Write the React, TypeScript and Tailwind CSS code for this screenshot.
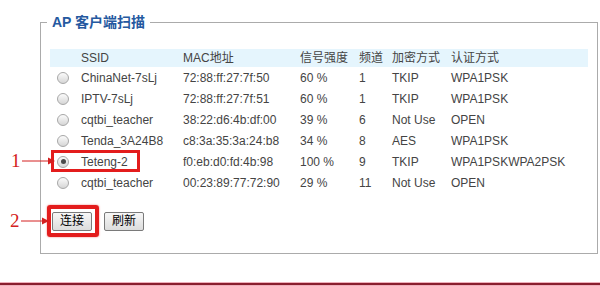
import React from 'react';

const rows = [
  { ssid: 'ChinaNet-7sLj', mac: '72:88:ff:27:7f:50', signal: '60 %', ch: '1', enc: 'TKIP', auth: 'WPA1PSK' },
  { ssid: 'IPTV-7sLj', mac: '72:88:ff:27:7f:51', signal: '60 %', ch: '1', enc: 'TKIP', auth: 'WPA1PSK' },
  { ssid: 'cqtbi_teacher', mac: '38:22:d6:4b:df:00', signal: '39 %', ch: '6', enc: 'Not Use', auth: 'OPEN' },
  { ssid: 'Tenda_3A24B8', mac: 'c8:3a:35:3a:24:b8', signal: '34 %', ch: '8', enc: 'AES', auth: 'WPA1PSK' },
  { ssid: 'Teteng-2', mac: 'f0:eb:d0:fd:4b:98', signal: '100 %', ch: '9', enc: 'TKIP', auth: 'WPA1PSKWPA2PSK', checked: true },
  { ssid: 'cqtbi_teacher', mac: '00:23:89:77:72:90', signal: '29 %', ch: '11', enc: 'Not Use', auth: 'OPEN' },
];

function Radio({ checked }: { checked?: boolean }) {
  return (
    <span className="ml-[7px] flex h-[12px] w-[12px] items-center justify-center rounded-full border border-[#a8a8a8] bg-gradient-to-b from-[#fbfbfb] to-[#d6d6d6]">
      {checked && <span className="h-[5px] w-[5px] rounded-full bg-[#4a4a4a]" />}
    </span>
  );
}

function Arrow({ x2 }: { x2: number }) {
  return (
    <svg width="60" height="12" viewBox="0 0 60 12" className="block">
      <line x1="0" y1="6" x2={x2 - 5} y2="6" stroke="#d42020" strokeWidth="1" />
      <polygon points={`${x2 - 7},2.5 ${x2},6 ${x2 - 7},9.5`} fill="#d42020" />
    </svg>
  );
}

export default function App() {
  return (
    <div
      className="relative flex h-[286px] w-[600px] flex-col bg-white text-[12px] text-[#444]"
      style={{ fontFamily: '"Liberation Sans", Arial, "Noto Sans CJK SC", sans-serif' }}
    >
      <div className="pl-[40px] pt-[14px]">
        <fieldset className="w-[558px] border border-[#ababab] px-[9px] pt-[19px] pb-[22px]">
          <legend className="ml-[-3px] px-[5px] text-[14px] font-bold leading-[16px] text-[#2559a0]">
            AP 客户端扫描
          </legend>
          <table className="w-[538px] table-fixed border-collapse">
            <colgroup>
              <col className="w-[28px]" />
              <col className="w-[102px]" />
              <col className="w-[117px]" />
              <col className="w-[59px]" />
              <col className="w-[33px]" />
              <col className="w-[59px]" />
              <col className="w-[140px]" />
            </colgroup>
            <thead>
              <tr className="h-[18px] bg-[#e5f5fd] text-left">
                <th className="font-normal"></th>
                <th className="pl-[3px] font-normal">SSID</th>
                <th className="pl-[3px] font-normal">MAC地址</th>
                <th className="pl-[3px] font-normal">信号强度</th>
                <th className="pl-[3px] font-normal">频道</th>
                <th className="pl-[3px] font-normal">加密方式</th>
                <th className="pl-[3px] font-normal">认证方式</th>
              </tr>
            </thead>
            <tbody>
              {rows.map((r, i) => (
                <tr key={i} className="h-[21px]">
                  <td>
                    <Radio checked={r.checked} />
                  </td>
                  <td className="pl-[3px]">{r.ssid}</td>
                  <td className="pl-[3px]">{r.mac}</td>
                  <td className="pl-[3px]">{r.signal}</td>
                  <td className="pl-[3px]">{r.ch}</td>
                  <td className="pl-[3px]">{r.enc}</td>
                  <td className="pl-[3px]">{r.auth}</td>
                </tr>
              ))}
            </tbody>
          </table>
          <div className="mt-[19px] ml-[2px] flex gap-[12px]">
            <button className="h-[19px] w-[40px] rounded-[2px] border border-[#7a7a7a] bg-gradient-to-b from-[#f7f7f7] to-[#dcdcdc] text-[12px] leading-[17px] text-black">
              连接
            </button>
            <button className="h-[19px] w-[40px] rounded-[2px] border border-[#7a7a7a] bg-gradient-to-b from-[#f7f7f7] to-[#dcdcdc] text-[12px] leading-[17px] text-black">
              刷新
            </button>
          </div>
        </fieldset>
      </div>

      <div className="mt-auto mb-[0px] h-[4px] border-t border-b border-[#eeb0bb] bg-[#8a1f2f]" />

      {/* annotations */}
      <div className="absolute left-[51px] top-[150px] h-[22px] w-[89px] border-[3px] border-[#e31c1c]" />
      <div className="absolute left-[47px] top-[205px] h-[32px] w-[52px] rounded-[3px] border-[4px] border-[#e31c1c] shadow-[0_0_2px_#f07070]" />

      <div className="absolute left-[11px] top-[150px] flex items-center">
        <span className="text-[19px] leading-[22px] text-[#d42020]" style={{ fontFamily: '"Liberation Serif", serif' }}>
          1
        </span>
        <div className="ml-[1px]">
          <Arrow x2={33} />
        </div>
      </div>
      <div className="absolute left-[10px] top-[210px] flex items-center">
        <span className="text-[19px] leading-[22px] text-[#d42020]" style={{ fontFamily: '"Liberation Serif", serif' }}>
          2
        </span>
        <div className="ml-[1px]">
          <Arrow x2={28} />
        </div>
      </div>
    </div>
  );
}
